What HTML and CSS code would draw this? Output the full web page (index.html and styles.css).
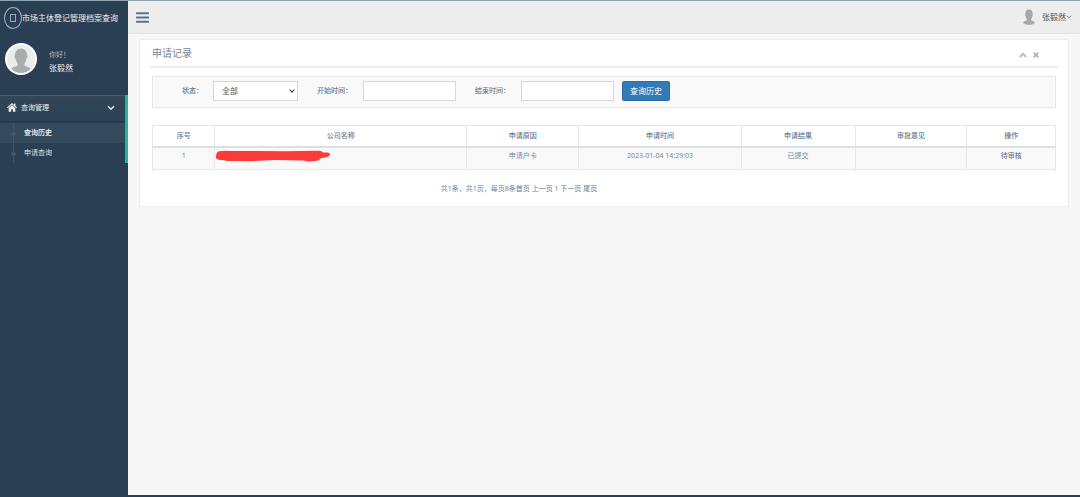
FILE: index.html
```html
<!DOCTYPE html>
<html lang="zh-CN">
<head>
<meta charset="utf-8">
<title>市场主体登记管理档案查询</title>
<link rel="stylesheet" href="styles.css">
</head>
<body>
<div class="app">
  <aside class="sidebar">
    <a class="brand" href="#">
      <span class="brand-icon"><span class="brand-glyph"></span></span>
      <span>市场主体登记管理档案查询</span>
    </a>
    <div class="profile">
      <svg class="avatar" viewBox="0 0 32 32" aria-hidden="true">
        <circle cx="16" cy="16" r="16" fill="#fff"/>
        <circle cx="16" cy="16" r="14" fill="#ebeded"/>
        <path d="M16 5.500C12 5.500 10 8.500 10 12C9 12 9.500 15 10.500 15.500C11 18 12 19.500 12.500 20.500V22.500C11 24 7.500 23.500 6.500 26C9 28.800 12.500 30 16 30S23 28.800 25.500 26C24.500 23.500 21 24 19.500 22.500V20.500C20 19.500 21 18 21.500 15.500C22.500 15 23 12 22 12C22 8.500 20 5.500 16 5.500Z" fill="#a8adad"/>
      </svg>
      <div class="profile-text">
        <span class="greeting">你好！</span>
        <strong class="profile-name">张毅然</strong>
      </div>
    </div>
    <nav class="menu">
      <a class="menu-head" href="#">
        <svg class="home-icon" viewBox="0 0 18 16" aria-hidden="true"><path d="M9 0L0 8L1.200 9.300L9 2.600L16.800 9.300L18 8L15.200 5.500V1H12.800V3.400ZM9 4L3 9.200V15.500H7.400V11H10.600V15.500H15V9.200Z" fill="#eef2f5"/></svg>
        <span>查询管理</span>
        <svg class="menu-arrow" viewBox="0 0 8 6" aria-hidden="true"><path d="M1 1.200L4 4.200L7 1.200" fill="none" stroke="#dbe4ea" stroke-width="1.600"/></svg>
      </a>
      <ul class="submenu">
        <li class="subitem current"><a href="#">查询历史</a></li>
        <li class="subitem"><a href="#">申请查询</a></li>
      </ul>
    </nav>
  </aside>
  <div class="content">
    <header class="topbar">
      <button class="toggle" type="button" aria-label="菜单"><svg viewBox="0 0 13 11" aria-hidden="true"><path d="M0.800 1.200H12.200M0.800 5.500H12.200M0.800 9.800H12.200" fill="none" stroke="#5a738e" stroke-width="2" stroke-linecap="round"/></svg></button>
      <button class="user" type="button">
        <svg class="user-icon" viewBox="0 0 12 16" aria-hidden="true"><path d="M6 0.500C3.200 0.500 2.200 2.500 2.400 5C1.900 5.200 2.200 7 2.700 7.200C3 8.700 3.300 9.500 3.900 10.200V11.300C3 12.200 0.500 12 0 14C1.500 15.300 4 15.800 6 15.800S10.500 15.300 12 14C11.500 12 9 12.200 8.100 11.300V10.200C8.700 9.500 9 8.700 9.300 7.200C9.800 7 10.100 5.200 9.600 5C9.800 2.500 8.800 0.500 6 0.500Z" fill="#a7a8aa"/></svg>
        <span>张毅然</span>
        <svg class="user-arrow" viewBox="0 0 6 4" aria-hidden="true"><path d="M1 0.800L3 2.800L5 0.800" fill="none" stroke="#6c7a89" stroke-width="0.900"/></svg>
      </button>
    </header>
    <main class="panel">
      <div class="panel-head">
        <h1 class="panel-title">申请记录</h1>
        <div class="panel-tools">
          <button type="button" aria-label="折叠"><svg viewBox="0 0 8 6" aria-hidden="true"><path d="M0.800 5L4 1.800L7.200 5" fill="none" stroke="#b9bdc0" stroke-width="1.900"/></svg></button>
          <button type="button" aria-label="关闭"><svg viewBox="0 0 6 6" aria-hidden="true"><path d="M0.700 0.700L5.300 5.300M5.300 0.700L0.700 5.300" fill="none" stroke="#b0b4b7" stroke-width="1.800"/></svg></button>
        </div>
      </div>
      <div class="panel-body">
        <form class="filter">
          <label class="filter-label short" for="state">状态：</label>
          <span class="select-wrap">
            <select id="state" class="control"><option>全部</option></select>
            <svg class="select-arrow" viewBox="0 0 6 4" aria-hidden="true"><path d="M0.600 0.700L3 3.100L5.400 0.700" fill="none" stroke="#444" stroke-width="1.100"/></svg>
          </span>
          <label class="filter-label" for="start">开始时间：</label>
          <input id="start" class="control" type="text">
          <label class="filter-label" for="end">结束时间：</label>
          <input id="end" class="control" type="text">
          <button class="query" type="button">查询历史</button>
        </form>
        <table class="records">
          <colgroup><col class="c-no"><col class="c-company"><col class="c-reason"><col class="c-time"><col class="c-result"><col class="c-opinion"><col class="c-action"></colgroup>
          <thead>
            <tr><th>序号</th><th>公司名称</th><th>申请原因</th><th>申请时间</th><th>申请结果</th><th>审批意见</th><th>操作</th></tr>
          </thead>
          <tbody>
            <tr>
              <td>1</td>
              <td class="company"><svg class="redaction" viewBox="0 0 116 12" aria-hidden="true"><path d="M4 1.200Q8 0.200 16 1L40 1L70 1.300L104 0.800Q107 1 108 2.500L113 2.500Q116 3.500 114.500 5.500Q113 7.500 106 8Q104 11 100 11Q94 12 88 10.500L60 10L36 11.200L12 11Q10 10 5 10Q0 9.500 1 6Q1.500 2 4 1.200Z" fill="#fc3a3a"/></svg></td>
              <td>申请户卡</td>
              <td>2023-01-04 14:29:03</td>
              <td>已提交</td>
              <td></td>
              <td class="status">待审核</td>
            </tr>
          </tbody>
        </table>
        <div class="pager">共1条，共1页，每页8条<a href="#">首页</a> <a href="#">上一页</a> 1 <a href="#">下一页</a> <a href="#">尾页</a></div>
      </div>
    </main>
  </div>
</div>
</body>
</html>
```

FILE: styles.css
```css
* {
  box-sizing: border-box;
}

body {
  margin: 0;
  background: #f7f7f7;
  color: #73879c;
  font: 7px/10px "Noto Sans", "Noto Sans CJK SC", sans-serif;
}

a {
  color: inherit;
  text-decoration: none;
}

button,
input,
select {
  margin: 0;
  font: inherit;
}

.app {
  display: flex;
  min-height: 100vh;
  border-top: 1px solid #8fa3b0;
  border-bottom: 2px solid #2a3f54;
}

.sidebar {
  flex: 0 0 128px;
  background: #2a3f54;
  color: #ecf0f1;
}

.brand {
  display: flex;
  align-items: center;
  height: 33px;
  padding-left: 4px;
  font-size: 8px;
  white-space: nowrap;
}

.brand-icon {
  display: flex;
  flex: none;
  align-items: center;
  justify-content: center;
  width: 18px;
  height: 22px;
  border: 1px solid #a9b6c0;
  border-radius: 50%;
}

.brand-glyph {
  width: 6px;
  height: 8px;
  border: 1px solid #8fb3b5;
}

.profile {
  display: flex;
  gap: 12px;
  height: 61px;
  padding: 9px 5px;
}

.avatar {
  width: 32px;
  height: 32px;
}

.profile-text {
  display: flex;
  flex-direction: column;
  gap: 3px;
  padding-top: 7px;
}

.greeting {
  color: #bab8b8;
}

.profile-name {
  font-size: 8px;
  font-weight: 400;
}

.menu {
  border-right: 3px solid #1abb9c;
}

.menu-head {
  display: flex;
  align-items: center;
  gap: 4px;
  height: 27px;
  padding: 0 10px 2px 7px;
  border-top: 1px solid #4a5b6c;
  border-bottom: 1px solid #22364a;
  background: linear-gradient(#334556, #2c4257);
}

.home-icon {
  width: 10px;
  height: 9px;
}

.menu-arrow {
  width: 8px;
  height: 6px;
  margin-left: auto;
}

.submenu {
  margin: 0;
  padding: 1px 0 0;
  list-style: none;
}

.subitem {
  position: relative;
  height: 20px;
  padding: 5px 0 5px 24px;
  color: #dde2e7;
}

.subitem::before {
  position: absolute;
  top: 0;
  bottom: 0;
  left: 13px;
  border-left: 1px solid #425668;
  content: "";
}

.subitem::after {
  position: absolute;
  top: 9px;
  left: 11px;
  width: 5px;
  height: 4px;
  border-radius: 50%;
  background: #425668;
  content: "";
}

.current {
  background: #35495d;
  color: #fff;
  font-weight: 500;
}

.content {
  flex: 1;
  min-width: 0;
}

.topbar {
  display: flex;
  align-items: center;
  justify-content: space-between;
  height: 33px;
  padding: 0 8px;
  border-bottom: 1px solid #e0e3e6;
  background: #ededed;
}

.toggle {
  display: flex;
  padding: 0;
  border: 0;
  background: none;
}

.toggle svg {
  width: 13px;
  height: 11px;
}

.user {
  display: flex;
  align-items: center;
  padding: 0;
  border: 0;
  background: none;
  color: #515356;
  font-size: 8px;
}

.user-icon {
  width: 12px;
  height: 16px;
  margin-right: 7px;
}

.user-arrow {
  width: 6px;
  height: 4px;
}

.panel {
  margin: 5px 11px 0;
  padding: 0 10px 12px;
  border: 1px solid #e9ebed;
  background: #fff;
}

.panel-head {
  display: flex;
  align-items: center;
  justify-content: space-between;
  height: 28px;
  padding: 0 18px 0 2px;
  border-bottom: 2px solid #ebeff2;
}

.panel-title {
  margin: 0;
  font-size: 10px;
  font-weight: 400;
}

.panel-tools {
  display: flex;
  gap: 5px;
  padding-top: 3px;
}

.panel-tools button {
  display: flex;
  padding: 0;
  border: 0;
  background: none;
}

.panel-tools svg {
  width: 8px;
  height: 6px;
}

.panel-body {
  padding: 8px 2px 0;
}

.filter {
  display: flex;
  align-items: flex-start;
  height: 32px;
  padding: 4px 0 0 29px;
  border: 1px solid #e8e8e8;
  background: #f9f9f9;
}

.filter-label {
  width: 36px;
  margin: 5px 10px 0 0;
  color: #687b8f;
  font-weight: 500;
}

.short {
  width: 21px;
}

.control {
  width: 93px;
  height: 20px;
  padding: 0 8px;
  border: 1px solid #d5d8da;
  border-radius: 0;
  background: #fff;
  color: #555;
}

.filter input + .filter-label {
  margin-left: 19px;
}

.select-wrap {
  position: relative;
  margin-right: 19px;
}

select.control {
  width: 85px;
  appearance: none;
  font-size: 8px;
}

.select-arrow {
  position: absolute;
  top: 8px;
  right: 3px;
  width: 6px;
  height: 4px;
  pointer-events: none;
}

.query {
  height: 20px;
  margin-left: 8px;
  padding: 0 7px;
  border: 1px solid #2e6da4;
  border-radius: 2px;
  background: #337ab7;
  color: #fff;
  font-size: 8px;
}

.records {
  width: 100%;
  margin-top: 17px;
  border-collapse: collapse;
  table-layout: fixed;
  text-align: center;
}

.c-no { width: 6.9%; }
.c-company { width: 27.9%; }
.c-reason { width: 12.4%; }
.c-time { width: 18%; }
.c-result { width: 12.6%; }
.c-opinion { width: 12.4%; }
.c-action { width: 9.8%; }

.records th,
.records td {
  padding: 0;
  border: 1px solid #e5e7e9;
}

.records th {
  height: 21px;
  border-bottom: 2px solid #dddfe1;
  color: #687b8f;
  font-weight: 500;
}

.records td {
  height: 23px;
  padding-bottom: 4px;
  background: #f9f9f9;
}

.records .company {
  text-align: left;
}

.redaction {
  display: block;
  width: 116px;
  height: 12px;
}

.records .status {
  color: #687b8f;
  font-weight: 500;
}

.pager {
  margin-top: 14px;
  padding-right: 170px;
  text-align: center;
}

.pager a {
  color: #687b8f;
}
```
